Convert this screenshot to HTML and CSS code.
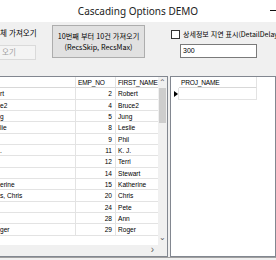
FILE: index.html
```html
<!DOCTYPE html>
<html lang="ko">
<head>
    <meta charset="UTF-8">
    <title>Cascading Options DEMO</title>
    <link rel="stylesheet" href="styles.css">
</head>
<body>

    <div class="window">
        <div class="titlebar">
            <span class="title">Cascading Options DEMO</span>
            <span class="minimize"></span>
        </div>

        <!-- Toolbar with fetch buttons and options -->
        <div class="toolbar">
            <div class="fetch-all">
                <div class="btn-cut">체 가져오기</div>
                <div class="btn-cut disabled">오기</div>
            </div>
            <div class="btn-skip">10번째 부터 10건 가져오기<br>(RecsSkip, RecsMax)</div>
            <div class="options">
                <label class="check"><span class="box"></span>상세정보 지연 표시(DetailDelay)</label>
                <div class="edit">300</div>
            </div>
        </div>

        <div class="grids">
            <!-- Master grid: employees -->
            <div class="grid master">
                <div class="cells">
                    <div class="row head">
                        <div class="c name"></div>
                        <div class="c no">EMP_NO</div>
                        <div class="c first">FIRST_NAME</div>
                    </div>
                    <div class="row"><div class="c name">rt</div><div class="c no num">2</div><div class="c first">Robert</div></div>
                    <div class="row"><div class="c name">e2</div><div class="c no num">4</div><div class="c first">Bruce2</div></div>
                    <div class="row"><div class="c name">g</div><div class="c no num">5</div><div class="c first">Jung</div></div>
                    <div class="row"><div class="c name">lie</div><div class="c no num">8</div><div class="c first">Leslie</div></div>
                    <div class="row"><div class="c name"></div><div class="c no num">9</div><div class="c first">Phil</div></div>
                    <div class="row"><div class="c name">.</div><div class="c no num">11</div><div class="c first">K. J.</div></div>
                    <div class="row"><div class="c name"></div><div class="c no num">12</div><div class="c first">Terri</div></div>
                    <div class="row"><div class="c name"></div><div class="c no num">14</div><div class="c first">Stewart</div></div>
                    <div class="row"><div class="c name">erine</div><div class="c no num">15</div><div class="c first">Katherine</div></div>
                    <div class="row"><div class="c name">s, Chris</div><div class="c no num">20</div><div class="c first">Chris</div></div>
                    <div class="row"><div class="c name"></div><div class="c no num">24</div><div class="c first">Pete</div></div>
                    <div class="row"><div class="c name"></div><div class="c no num">28</div><div class="c first">Ann</div></div>
                    <div class="row"><div class="c name">ger</div><div class="c no num">29</div><div class="c first">Roger</div></div>
                </div>
                <div class="vscroll">
                    <span class="arrow">&#8963;</span>
                    <span class="thumb"></span>
                    <span class="arrow down">&#8964;</span>
                </div>
                <div class="hscroll"><span class="arrow">&#8250;</span></div>
                <div class="corner"></div>
            </div>

            <div class="splitter"></div>

            <!-- Detail grid: projects -->
            <div class="grid detail">
                <div class="row head">
                    <div class="c ind"></div>
                    <div class="c proj">PROJ_NAME</div>
                </div>
                <div class="row">
                    <div class="c ind"><span class="pointer"></span></div>
                    <div class="c proj"></div>
                </div>
            </div>
        </div>
    </div>

</body>
</html>
```

FILE: styles.css
```css
body {
    margin: 0;
    background-color: #f0f0f0;
    font-family: 'Liberation Sans', Arial, 'Noto Sans CJK KR', sans-serif;
    font-size: 6.6px;
    color: #000;
}

.window {
    width: 276px;
    height: 260px;
    overflow: hidden;
    display: flex;
    flex-direction: column;
}

.titlebar {
    height: 22px;
    flex: none;
    background-color: #fff;
    display: flex;
    align-items: center;
    justify-content: center;
    position: relative;
}

.title {
    font-family: 'Noto Sans', sans-serif;
    font-size: 10px;
    color: #222;
}

.minimize {
    position: absolute;
    right: 0;
    top: 10px;
    width: 6px;
    height: 1px;
    background-color: #111;
}

/* toolbar */
.toolbar {
    height: 54px;
    flex: none;
    display: flex;
    align-items: flex-start;
    font-family: 'Noto Sans CJK KR', 'Liberation Sans', sans-serif;
    font-size: 7.5px;
}

.fetch-all {
    flex: none;
    width: 36px;
    margin-right: 16px;
    padding-top: 5px;
    display: flex;
    flex-direction: column;
    gap: 6px;
}

.btn-cut {
    height: 12px;
    line-height: 12px;
    white-space: nowrap;
}

.btn-cut.disabled {
    height: 13px;
    color: #a0a0a0;
    border: 1px solid #dadada;
    border-left: none;
    background-color: #f4f4f4;
    padding-left: 2px;
}

.btn-skip {
    flex: none;
    margin-top: 3px;
    width: 93px;
    height: 33px;
    border: 1px solid #adadad;
    background-color: #e1e1e1;
    text-align: center;
    line-height: 11px;
    padding-top: 5px;
    box-sizing: border-box;
    white-space: nowrap;
    font-size: 7.2px;
}

.options {
    flex: none;
    margin-left: 26px;
    padding-top: 7px;
    display: flex;
    flex-direction: column;
    gap: 5px;
}

.check {
    display: flex;
    align-items: center;
    gap: 3px;
    white-space: nowrap;
    font-size: 7px;
}

.box {
    width: 7px;
    height: 7px;
    border: 1px solid #333;
    background-color: #fff;
}

.edit {
    margin-left: 9px;
    width: 77px;
    height: 14px;
    border: 1px solid #7a7a7a;
    background-color: #fff;
    font-family: 'Liberation Sans', sans-serif;
    font-size: 7px;
    line-height: 12px;
    padding-left: 2px;
    box-sizing: border-box;
}

/* grids */
.grids {
    height: 181px;
    flex: none;
    display: flex;
    border-bottom: 1px solid #a0a0a0;
}

.grid {
    background-color: #fff;
    border: 1px solid #828790;
    box-sizing: border-box;
}

.master {
    flex: none;
    width: 168px;
    border-left: none;
    display: grid;
    grid-template-columns: 1fr 9px;
    grid-template-rows: 1fr 11px;
}

.cells {
    overflow: hidden;
}

.row {
    display: flex;
    height: 11.33px;
    line-height: 11px;
    white-space: nowrap;
}

.c {
    flex: none;
    border-right: 1px solid #e3e3e3;
    border-bottom: 1px solid #e3e3e3;
    box-sizing: border-box;
    overflow: hidden;
    padding: 0 2px;
}

.name {
    width: 76px;
    padding-left: 0;
}

.no {
    width: 40px;
}

.num {
    text-align: right;
    padding-right: 3px;
}

.first {
    width: 60px;
}

.head .c {
    border-bottom-color: #d8d8d8;
    letter-spacing: -0.2px;
}

.vscroll {
    background-color: #f0f0f0;
    display: flex;
    flex-direction: column;
    align-items: center;
}

.arrow {
    height: 11px;
    line-height: 12px;
    font-size: 8px;
    color: #606060;
}

.thumb {
    width: 7px;
    height: 35px;
    background-color: #cdcdcd;
}

.arrow.down {
    margin-top: auto;
    line-height: 8px;
}

.hscroll {
    background-color: #f0f0f0;
    display: flex;
    justify-content: flex-end;
    padding-right: 4px;
}

.hscroll .arrow {
    font-size: 10px;
    line-height: 10px;
}

.corner {
    background-color: #f0f0f0;
}

.splitter {
    width: 2px;
    flex: none;
}

.detail {
    flex: 1;
}

.ind {
    width: 8px;
    padding: 0;
    position: relative;
}

.head .ind {
    border-right: none;
    border-bottom: none;
}

.row .ind {
    border-bottom: none;
}

.proj {
    width: 78px;
    padding-left: 2px;
}

.pointer {
    position: absolute;
    left: 3px;
    top: 3px;
    border-left: 4px solid #000;
    border-top: 3.5px solid transparent;
    border-bottom: 3.5px solid transparent;
}
```
